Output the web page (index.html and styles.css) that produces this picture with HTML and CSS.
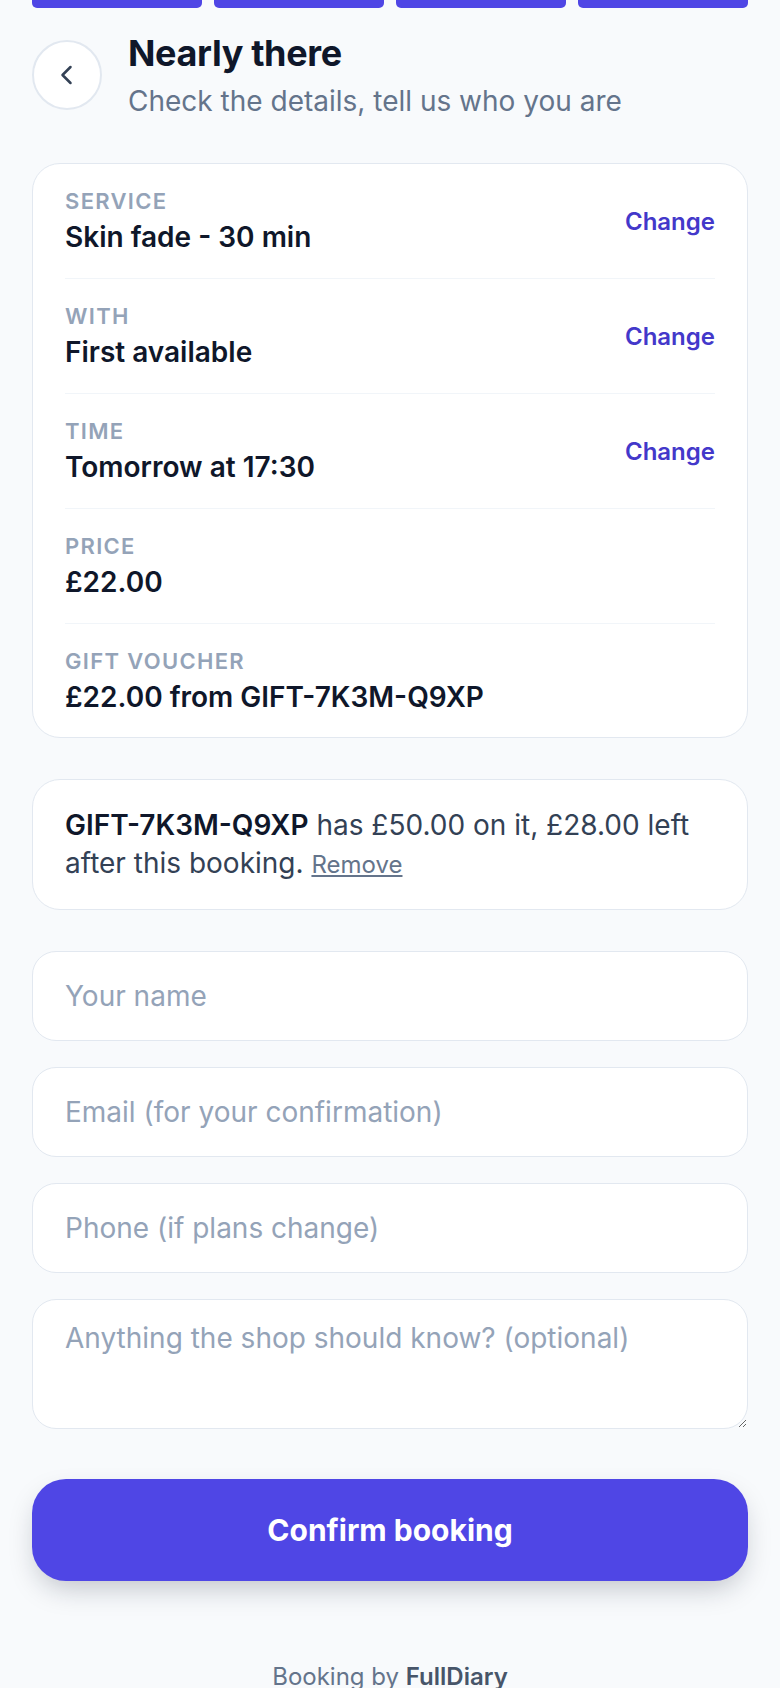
FILE: index.html
```html
<!DOCTYPE html>
<html lang="en">
<head>
    <meta charset="UTF-8">
    <meta name="viewport" content="width=device-width, initial-scale=1.0">
    <title>Nearly there</title>
    <link rel="stylesheet" href="styles.css">
</head>
<body>
    <div class="page">
        <div class="steps">
            <span class="step"></span>
            <span class="step"></span>
            <span class="step"></span>
            <span class="step"></span>
        </div>

        <div class="header">
            <button class="back" aria-label="Back">
                <svg width="24" height="24" viewBox="0 0 24 24" fill="none" stroke="currentColor" stroke-width="2.5" stroke-linecap="round" stroke-linejoin="round"><path d="M15.5 4l-8 8 8 8"/></svg>
            </button>
            <div class="titles">
                <h1>Nearly there</h1>
                <p>Check the details, tell us who you are</p>
            </div>
        </div>

        <div class="summary">
            <div class="row">
                <div class="info">
                    <div class="label">Service</div>
                    <div class="value">Skin fade - 30 min</div>
                </div>
                <a class="change" href="#">Change</a>
            </div>
            <div class="row">
                <div class="info">
                    <div class="label">With</div>
                    <div class="value">First available</div>
                </div>
                <a class="change" href="#">Change</a>
            </div>
            <div class="row">
                <div class="info">
                    <div class="label">Time</div>
                    <div class="value">Tomorrow at 17:30</div>
                </div>
                <a class="change" href="#">Change</a>
            </div>
            <div class="row">
                <div class="info">
                    <div class="label">Price</div>
                    <div class="value">£22.00</div>
                </div>
            </div>
            <div class="row">
                <div class="info">
                    <div class="label">Gift voucher</div>
                    <div class="value">£22.00 from GIFT-7K3M-Q9XP</div>
                </div>
            </div>
        </div>

        <div class="voucher">
            <strong>GIFT-7K3M-Q9XP</strong> has £50.00 on it, £28.00 left after this booking. <a class="remove" href="#">Remove</a>
        </div>

        <form class="details">
            <input class="field" type="text" placeholder="Your name">
            <input class="field" type="email" placeholder="Email (for your confirmation)">
            <input class="field" type="tel" placeholder="Phone (if plans change)">
            <textarea class="field notes" placeholder="Anything the shop should know? (optional)"></textarea>
            <button class="confirm" type="button">Confirm booking</button>
        </form>

        <div class="footer">Booking by <span>FullDiary</span></div>
    </div>
</body>
</html>
```

FILE: styles.css
```css
body {
    margin: 0;
    background-color: #f8fafc;
    font-family: Inter, "Noto Sans", sans-serif;
    color: #0f172a;
}
.page {
    padding: 0 32px;
}
.steps {
    display: flex;
    gap: 12px;
}
.step {
    flex: 1;
    height: 8px;
    background-color: #4f46e5;
    border-radius: 0 0 5px 5px;
}
.header {
    display: flex;
    align-items: center;
    gap: 26px;
    margin-top: 23px;
    margin-bottom: 44px;
}
.back {
    flex: none;
    width: 70px;
    height: 70px;
    border-radius: 50%;
    border: 2px solid #e2e8f0;
    background-color: #ffffff;
    color: #334155;
    display: flex;
    align-items: center;
    justify-content: center;
    padding: 0;
}
.titles h1 {
    margin: 0;
    font-size: 36px;
    line-height: 44px;
    font-weight: 700;
    letter-spacing: -0.01em;
}
.titles p {
    margin: 8px 0 0;
    font-size: 28px;
    line-height: 36px;
    color: #64748b;
}
.summary {
    background-color: #ffffff;
    border: 1px solid #e2e8f0;
    border-radius: 28px;
    padding: 0 32px;
}
.row {
    display: flex;
    align-items: center;
    justify-content: space-between;
    padding: 24px 0 23px;
    border-bottom: 1px solid #f1f5f9;
}
.row:last-child {
    border-bottom: none;
    padding-bottom: 22px;
}
.label {
    font-size: 22px;
    line-height: 26px;
    font-weight: 600;
    text-transform: uppercase;
    letter-spacing: 0.06em;
    color: #94a3b8;
}
.value {
    margin-top: 5px;
    font-size: 28px;
    line-height: 36px;
    font-weight: 600;
}
.change {
    font-size: 24px;
    font-weight: 600;
    color: #4338ca;
    text-decoration: none;
}
.voucher {
    margin-top: 41px;
    background-color: #ffffff;
    border: 1px solid #e2e8f0;
    border-radius: 28px;
    padding: 26px 32px 25px;
    font-size: 28px;
    line-height: 38px;
    color: #334155;
}
.voucher strong {
    font-weight: 600;
    color: #0f172a;
}
.remove {
    font-size: 24px;
    color: #64748b;
}
.details {
    margin-top: 41px;
    display: flex;
    flex-direction: column;
    gap: 26px;
}
.field {
    box-sizing: border-box;
    width: 100%;
    height: 90px;
    border: 1px solid #e2e8f0;
    border-radius: 24px;
    background-color: #ffffff;
    padding: 0 32px;
    font-family: inherit;
    font-size: 28px;
    color: #0f172a;
}
.field::placeholder {
    color: #94a3b8;
}
.notes {
    height: 130px;
    padding: 20px 32px;
    line-height: 36px;
}
.confirm {
    margin-top: 24px;
    height: 102px;
    border: none;
    border-radius: 34px;
    background-color: #4f46e5;
    color: #ffffff;
    font-family: inherit;
    font-size: 30px;
    font-weight: 700;
    box-shadow: 0 12px 28px -6px rgba(15, 23, 42, 0.25);
}
.footer {
    margin-top: 78px;
    text-align: center;
    font-size: 24px;
    line-height: 36px;
    color: #64748b;
}
.footer span {
    font-weight: 600;
    color: #475569;
}
```
